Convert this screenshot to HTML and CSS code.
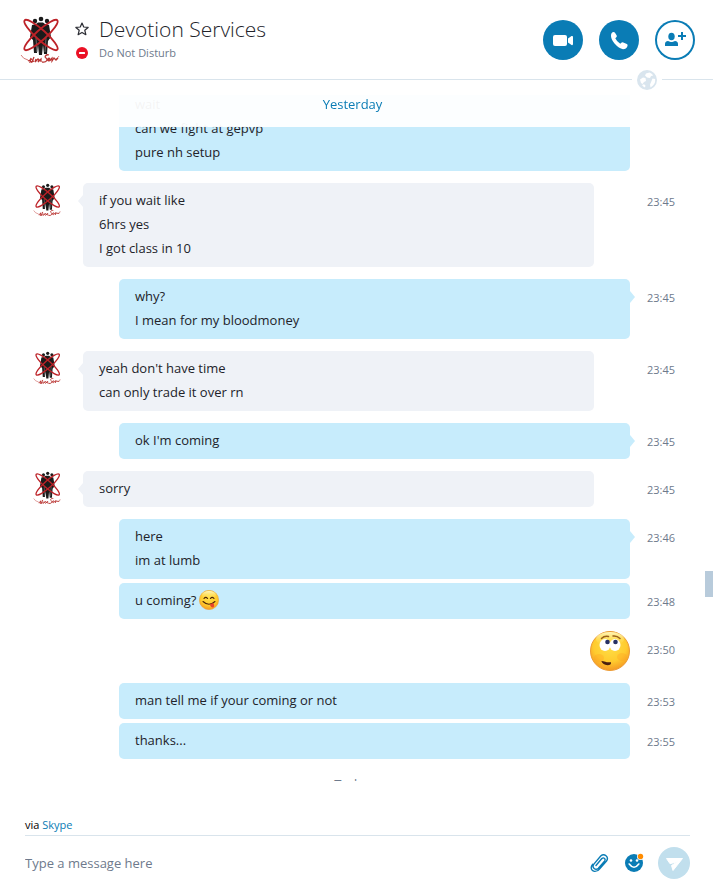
FILE: index.html
```
<!DOCTYPE html>
<html lang="en">
<head>
    <meta charset="UTF-8">
    <meta name="viewport" content="width=device-width, initial-scale=1.0">
    <title>Devotion Services</title>
    <link rel="stylesheet" href="styles.css">
</head>
<body>
<svg class="defs" aria-hidden="true">
    <defs>
        <radialGradient id="face" cx="50%" cy="35%" r="65%">
            <stop offset="0" stop-color="#ffe04a"/>
            <stop offset="0.65" stop-color="#ffcb2e"/>
            <stop offset="1" stop-color="#f59a23"/>
        </radialGradient>
        <linearGradient id="shine" x1="0" y1="0" x2="0" y2="1">
            <stop offset="0" stop-color="#fffbd0" stop-opacity="0.9"/>
            <stop offset="1" stop-color="#ffe04a" stop-opacity="0"/>
        </linearGradient>
        <symbol id="logo" viewBox="0 0 40 48">
            <g fill="#1b1b1b">
                <circle cx="21" cy="3" r="2.300"/>
                <circle cx="15" cy="5" r="2.200"/>
                <circle cx="27" cy="5" r="2.200"/>
                <path d="M12 9l4-1 2-1.500h5l2 1.500 4 1 2 12-3 4-1 13h-3l-1-9-1 10h-3l-1-10-1 8h-3l-1-13-3-3z"/>
            </g>
            <path d="M16 22l1 14M26 22l-1 14" stroke="#888" stroke-width="0.700"/>
            <g fill="none" stroke="#bd2228" stroke-width="1.900">
                <ellipse cx="21" cy="19" rx="22" ry="5" transform="rotate(42 21 19)"/>
                <ellipse cx="21" cy="19" rx="22" ry="5" transform="rotate(-42 21 19)"/>
            </g>
            <path d="M1 39q2 4 7 5M36 43q2-1 3-3" fill="none" stroke="#cf6d6b" stroke-width="0.900"/>
            <path d="M8 45l4-2M11 42l-1 4 3-1M14 41l-2 5 2-1M16 43l-1 3 3-3 1 1-1 2 3-3 0 3M29 39c-3-1-5 2-3 3s1 5-4 4M28 44c3-1 1-3 0-1s2 3 3 0l1-1 0 3 2-3 2 2 2-2" fill="none" stroke="#b93533" stroke-width="1.300"/>
        </symbol>
    </defs>
</svg>

<header class="header">
    <svg class="header-logo" role="img" aria-label="Devotion Services"><use href="#logo"/></svg>
    <div class="contact">
        <svg class="contact-star" viewBox="0 0 16 16"><path d="M8 1.200l2 4.500 5 .5-3.800 3.300 1.200 5L8 11.900l-4.400 2.600 1.200-5L1 6.200l5-.5z" fill="none" stroke="#2b2c33" stroke-width="1.400" stroke-linejoin="round"/></svg>
        <h1 class="contact-name">Devotion Services</h1>
        <svg class="contact-dnd" viewBox="0 0 12 12"><circle cx="6" cy="6" r="6" fill="#eb1125"/><rect x="3" y="5" width="6" height="2" rx="0.5" fill="#fff"/></svg>
        <p class="contact-status">Do Not Disturb</p>
    </div>
    <div class="actions">
        <button type="button" class="action" aria-label="Video call">
            <svg viewBox="0 0 40 40"><rect x="10" y="15" width="14" height="11" rx="2" fill="currentColor"/><path d="M25 18.500l3.500-2.500q1.500-.5 1.500 1v7q0 1.500-1.500 1L25 22.500z" fill="currentColor"/></svg>
        </button>
        <button type="button" class="action" aria-label="Call">
            <svg viewBox="0 0 40 40"><path d="M13.500 12.300q1.500-1 2.500.5l1.700 2.700q.6 1.200-.6 2l-.8.8q1.500 3.600 5 5.400l1-1q.8-.9 2-.3l3.500 1.600q1.200.7.7 2-1.200 3.200-4.500 3.200Q20 28.600 15.500 23.500 11.700 19 12 15q.3-2 1.500-2.700z" fill="currentColor"/></svg>
        </button>
        <button type="button" class="action action-outline" aria-label="Add people">
            <svg viewBox="0 0 40 40"><ellipse cx="16.500" cy="16.500" rx="3.200" ry="3.800" fill="currentColor"/><path d="M10 26v-2q0-2.500 3-2.900l2 .6q1.500.5 3 0l2-.6q3 .4 3 2.900v2z" fill="currentColor"/><path d="M27 12v8M23 16h8" stroke="currentColor" stroke-width="2"/></svg>
        </button>
    </div>
    <span class="globe">
        <svg viewBox="0 0 20 20"><circle cx="10" cy="10" r="10" fill="#d9e5ee"/><path d="M12.500 2.500q2.500.8 3.800 3l-2.300.5-1 2-3-.5-2-2 1-2zM18.200 9q.5 5.500-4.700 8.500l-.5-3 1.500-3.500 1-2.500zM3 9.500l3-2 2.500.5.5 3-2 1-1.500 2-1.500-1zM5 15l2-.8 1.500 1.300-.5 2q-2-.7-3-2.500z" fill="#fff"/></svg>
    </span>
</header>

<main class="chat">
    <h2 class="day day-sticky">Yesterday</h2>
    <ol class="messages">
        <li class="message mine">
            <div class="bubble"><p>wait</p><p>can we fight at gepvp</p><p>pure nh setup</p></div>
        </li>
        <li class="message">
            <svg class="avatar"><use href="#logo"/></svg>
            <div class="bubble tail"><p>if you wait like</p><p>6hrs yes</p><p>I got class in 10</p></div>
            <time class="time">23:45</time>
        </li>
        <li class="message mine">
            <div class="bubble tail"><p>why?</p><p>I mean for my bloodmoney</p></div>
            <time class="time">23:45</time>
        </li>
        <li class="message">
            <svg class="avatar"><use href="#logo"/></svg>
            <div class="bubble tail"><p>yeah don't have time</p><p>can only trade it over rn</p></div>
            <time class="time">23:45</time>
        </li>
        <li class="message mine">
            <div class="bubble tail"><p>ok I'm coming</p></div>
            <time class="time">23:45</time>
        </li>
        <li class="message">
            <svg class="avatar"><use href="#logo"/></svg>
            <div class="bubble tail"><p>sorry</p></div>
            <time class="time">23:45</time>
        </li>
        <li class="message mine">
            <div class="bubble tail"><p>here</p><p>im at lumb</p></div>
            <time class="time">23:46</time>
        </li>
        <li class="message mine next">
            <div class="bubble">
                <p class="with-emoji">u coming?
                    <svg class="emoji" viewBox="0 0 20 20"><circle cx="10" cy="10" r="9.700" fill="url(#face)" stroke="#eda035" stroke-width="0.5"/><ellipse cx="10" cy="5" rx="7" ry="4" fill="url(#shine)"/><path d="M5 8.500q1.700-2.300 3.600 0M11.400 8.500q1.700-2.300 3.600 0M4 11.500q6 5.500 12 0" fill="none" stroke="#4b2408" stroke-width="1.100" stroke-linecap="round"/><path d="M10.500 14.300l4-1.300q1.500 4-.5 4.600-2 .2-3.500-3.300z" fill="#e8452c"/></svg>
                </p>
            </div>
            <time class="time">23:48</time>
        </li>
        <li class="message mine">
            <svg class="emoji-large" viewBox="0 0 40 40"><circle cx="20" cy="20" r="19.500" fill="url(#face)" stroke="#ec9b35"/><ellipse cx="20" cy="8" rx="14" ry="7" fill="url(#shine)"/><ellipse cx="9" cy="27" rx="5" ry="4" fill="#ff9b20" opacity="0.3"/><ellipse cx="32" cy="26" rx="5" ry="4" fill="#ff9b20" opacity="0.3"/><path d="M11.500 7.500q3-3 7-2M23 5q4-.5 7 2.500" fill="none" stroke="#9a601c" stroke-width="1.500" stroke-linecap="round"/><g fill="#fff"><ellipse cx="15" cy="14" rx="5.500" ry="6"/><ellipse cx="25" cy="14" rx="5.500" ry="6"/></g><circle cx="17.500" cy="11" r="2.300" fill="#263064"/><circle cx="25.500" cy="11" r="2.300" fill="#263064"/><path d="M11.300 30q2 0 4 .8t5.700.4q.5 2.800-3.500 3-4.700-.2-6.200-4.200z" fill="#4a2010"/></svg>
            <time class="time">23:50</time>
        </li>
        <li class="message mine">
            <div class="bubble"><p>man tell me if your coming or not</p></div>
            <time class="time">23:53</time>
        </li>
        <li class="message mine next">
            <div class="bubble"><p>thanks...</p></div>
            <time class="time">23:55</time>
        </li>
    </ol>
    <h2 class="day day-next">Today</h2>
    <span class="scroll-thumb"></span>
</main>

<form class="composer">
    <p class="via">via <a href="#">Skype</a></p>
    <div class="composer-row">
        <input type="text" class="composer-input" aria-label="Message" placeholder="Type a message here">
        <button type="button" class="tool" aria-label="Attach file">
            <svg viewBox="0 0 20 20"><path d="M6 12.500l5.800-6.900q1.500-1.300 2.700-.2t0 2.700l-6.100 7.200q-2.200 2-4.300.2t-.2-4.400l6.800-8q2.700-2.400 5.300-.3t.5 5.200L9.700 15.800q-2 2.800-5.200 2.600-3.200-.4-3.300-3.800 0-1.600 1.500-3.300" fill="none" stroke="currentColor" stroke-width="1.400" stroke-linecap="round"/></svg>
        </button>
        <button type="button" class="tool" aria-label="Emoticons">
            <svg viewBox="0 0 20 20"><circle cx="10" cy="10" r="9" fill="currentColor"/><circle cx="7" cy="7.500" r="1.300" fill="#fff"/><circle cx="13" cy="7.500" r="1.300" fill="#fff"/><path d="M5.200 11q4.800 6.500 9.600 0" fill="none" stroke="#fff" stroke-width="1.600" stroke-linecap="round"/><circle cx="16.500" cy="3.500" r="3.500" fill="#fff"/><circle cx="16.500" cy="3.500" r="2.700" fill="#ff8c00"/></svg>
        </button>
        <button type="submit" class="send" aria-label="Send">
            <svg viewBox="0 0 32 32"><path d="M8.500 11.500h16L15 23.500l-1.500-5 6-3.800-7.500 2z" fill="#fff" stroke="#fff" stroke-linejoin="round"/></svg>
        </button>
    </div>
</form>
</body>
</html>
```

FILE: styles.css
```
* {
    box-sizing: border-box;
}

body {
    display: flex;
    flex-direction: column;
    height: 100vh;
    margin: 0;
    background: #fff;
    color: #22232a;
    font-family: "Open Sans", "Noto Sans", sans-serif;
    font-size: 13px;
}

h1, h2, p, ol {
    margin: 0;
    padding: 0;
    font-weight: 400;
}

button {
    padding: 0;
    border: none;
    background: none;
    cursor: pointer;
}

svg {
    display: block;
}

.defs {
    position: absolute;
    width: 0;
    height: 0;
}

/* header */

.header {
    position: relative;
    display: flex;
    flex: none;
    align-items: center;
    height: 80px;
    padding: 0 18px 0 20px;
    border-bottom: 1px solid #d9e4ec;
}

.header-logo {
    width: 40px;
    height: 48px;
}

.contact {
    display: grid;
    flex: 1;
    grid-template-columns: 14px 1fr;
    grid-template-rows: 26px 22px;
    column-gap: 10px;
    align-items: center;
    justify-items: start;
    margin-left: 15px;
}

.contact-star {
    width: 14px;
    height: 14px;
}

.contact-name {
    font-size: 21px;
    font-weight: 300;
    line-height: 26px;
}

.contact-dnd {
    width: 12px;
    height: 12px;
    justify-self: center;
}

.contact-status {
    color: #6e7a8c;
    font-size: 11px;
    line-height: 22px;
}

.actions {
    display: flex;
    gap: 16px;
}

.action {
    width: 40px;
    height: 40px;
    border-radius: 50%;
    background: #0a7cb5;
    color: #fff;
}

.action-outline {
    background: #fff;
    box-shadow: inset 0 0 0 2px #0a7cb5;
    color: #0a7cb5;
}

.globe {
    position: absolute;
    right: 51px;
    bottom: -11px;
    padding: 0 5px;
    background: #fff;
}

.globe svg {
    width: 20px;
    height: 20px;
}

/* conversation */

.chat {
    position: relative;
    flex: 1;
    min-height: 0;
    margin-top: 15px;
    overflow: hidden;
}

.day {
    padding-right: 8px;
    font-size: 13px;
    line-height: 18px;
    text-align: center;
}

.day-sticky {
    position: sticky;
    top: 0;
    z-index: 1;
    height: 32px;
    background: rgba(255, 255, 255, 0.95);
    color: #0a7cb5;
}

.day-next {
    margin-top: 16px;
    color: #6e7a8c;
}

.messages {
    display: flex;
    flex-direction: column;
    gap: 12px;
    margin-top: -40px;
    list-style: none;
}

.message {
    position: relative;
    display: flex;
    align-items: flex-start;
    padding: 0 83px 0 33px;
}

.mine {
    justify-content: flex-end;
    padding-left: 119px;
}

.next {
    margin-top: -8px;
}

.avatar {
    width: 28px;
    height: 34px;
    margin-right: 22px;
}

.bubble {
    position: relative;
    flex: 1;
    margin-right: 36px;
    padding: 5px 16px 7px;
    border-radius: 5px;
    background: #eff2f7;
    line-height: 24px;
}

.mine .bubble {
    margin-right: 0;
    background: #c7ecfc;
}

.tail::before {
    content: "";
    position: absolute;
    top: 12px;
    left: -5px;
    border: solid transparent;
    border-width: 6px 5px 6px 0;
    border-right-color: #eff2f7;
}

.mine .tail::before {
    right: -5px;
    left: auto;
    border-width: 6px 0 6px 5px;
    border-left-color: #c7ecfc;
}

.with-emoji {
    display: flex;
    align-items: center;
    gap: 3px;
}

.emoji {
    width: 20px;
    height: 20px;
}

.emoji-large {
    width: 40px;
    height: 40px;
}

.time {
    position: absolute;
    top: 10px;
    right: 38px;
    color: #6e7a8c;
    font-size: 11px;
    line-height: 18px;
}

.scroll-thumb {
    position: absolute;
    top: 476px;
    right: 0;
    width: 8px;
    height: 26px;
    background: #b8cbdb;
}

/* message box */

.composer {
    flex: none;
    padding: 36px 23px 8px 25px;
}

.via {
    padding-bottom: 2px;
    border-bottom: 1px solid #d9e4ec;
    color: #000;
    font-size: 11px;
    line-height: 16px;
}

.via a {
    color: #0a7cb5;
    text-decoration: none;
}

.composer-row {
    display: flex;
    align-items: center;
    gap: 14px;
    padding-top: 11px;
}

.composer-input {
    flex: 1;
    min-width: 0;
    padding: 0;
    border: none;
    outline: none;
    color: #2b2c33;
    font: inherit;
    line-height: 24px;
}

.composer-input::placeholder {
    color: #6e7a8c;
    opacity: 1;
}

.tool {
    width: 20px;
    height: 20px;
    color: #0a7cb5;
}

.send {
    width: 32px;
    height: 32px;
    border-radius: 50%;
    background: #c1dfed;
}
```
